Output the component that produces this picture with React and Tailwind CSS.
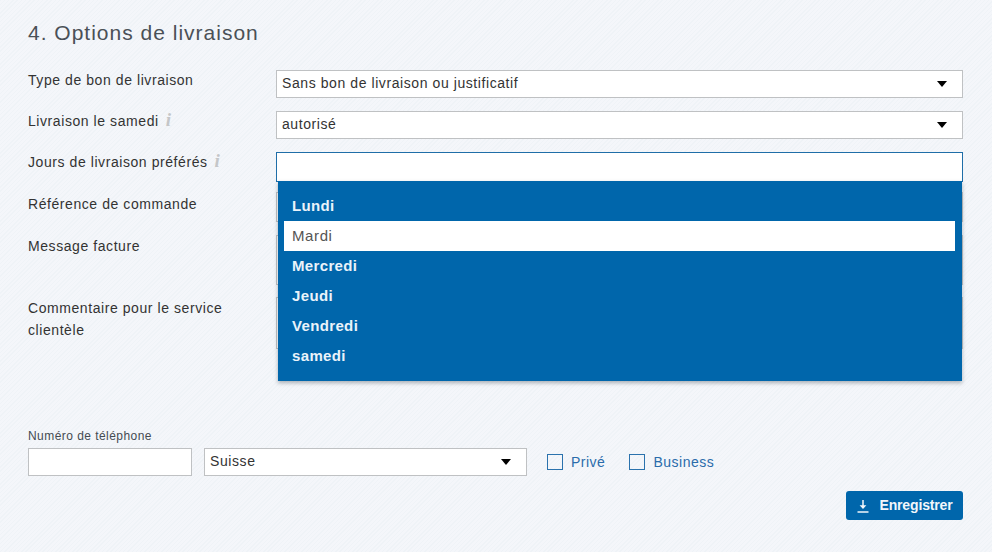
import React from 'react';

const days = ['Lundi', 'Mardi', 'Mercredi', 'Jeudi', 'Vendredi', 'samedi'];

const Caret = () => (
  <span className="w-0 h-0 border-x-[5px] border-x-transparent border-t-[6px] border-t-black" />
);

const InfoMark = () => (
  <span className="ml-[7px] font-['Liberation_Serif',serif] italic font-bold text-[19px] leading-none text-[#c4c6c8]">i</span>
);

const Select = ({ value, className = '' }) => (
  <div className={`h-[28px] bg-white border border-[#bfc1c3] flex items-center justify-between pl-[5px] pr-[15px] text-[14px] tracking-[0.58px] text-[#333] ${className}`}>
    <span className="-mt-[2px]">{value}</span>
    <Caret />
  </div>
);

const Row = ({ label, className = '', labelClass = '', children }) => (
  <div className={`flex ${className}`}>
    <div className={`w-[248px] shrink-0 tracking-[0.57px] leading-[22px] text-[14px] text-[#333] ${labelClass}`}>{label}</div>
    <div className="flex-1">{children}</div>
  </div>
);

const Checkbox = ({ label }) => (
  <label className="flex items-center gap-[8px] text-[14px] text-[#2a6cab] tracking-[0.5px]">
    <span className="w-[16px] h-[16px] border border-[#2a72ad] bg-transparent" />
    {label}
  </label>
);

const App = () => {
  return (
    <div className="relative w-[992px] h-[552px] overflow-hidden font-['Liberation_Sans',sans-serif] bg-[#f1f4f8] bg-[repeating-linear-gradient(135deg,#eff3f7_0px,#eff3f7_1px,#f4f6fa_1px,#f4f6fa_3px)] pl-[28px] pr-[29px] pt-[21px]">
      <h2 className="text-[21px] leading-[24px] tracking-[1px] text-[#4a5056] font-normal">4. Options de livraison</h2>

      <div className="mt-[25px]">
        <Row label="Type de bon de livraison" labelClass="-mt-[1px]">
          <Select value="Sans bon de livraison ou justificatif" />
        </Row>
        <Row label={<>Livraison le samedi<InfoMark /></>} className="mt-[13px]" labelClass="-mt-[1px]">
          <Select value="autorisé" />
        </Row>
        <div className="relative mt-[13px]">
          <Row label={<>Jours de livraison préférés<InfoMark /></>} labelClass="-mt-[1px]">
            <div className="h-[30px] bg-white border border-[#1f6ea8]" />
          </Row>

          {/* open day list */}
          <ul className="absolute z-10 left-[250px] top-[29px] w-[684px] h-[200px] bg-[#0066ab] pt-[10px] pl-[6px] pr-[7px] shadow-[0_2px_4px_rgba(60,70,80,0.4)] text-[15px]">
            {days.map((day) => (
              <li
                key={day}
                className={`h-[30px] leading-[30px] pl-[8px] ${day === 'Mardi' ? 'bg-white text-[#555] tracking-[0.6px]' : 'text-[#eaf3fa] font-bold tracking-[0.35px]'}`}
              >
                {day}
              </li>
            ))}
          </ul>
        </div>
        <Row label="Référence de commande" className="mt-[10px]" labelClass="pt-[1px]">
          <div className="h-[30px] bg-white border border-[#bfc1c3]" />
        </Row>
        <Row label="Message facture" className="mt-[13px]">
          <div className="h-[50px] bg-white border border-[#bfc1c3]" />
        </Row>
        <Row label={<>Commentaire pour le service<br />clientèle</>} className="mt-[12px]" labelClass="pr-[20px]">
          <div className="h-[52px] bg-white border border-[#bfc1c3]" />
        </Row>
      </div>

      <div className="mt-[80px] text-[12px] leading-[14px] tracking-[0.45px] text-[#444b52]">Numéro de téléphone</div>
      <div className="mt-[5px] flex items-center">
        <div className="w-[164px] h-[28px] bg-white border border-[#bfc1c3]" />
        <Select value="Suisse" className="w-[323px] ml-[12px]" />
        <div className="ml-[20px] flex items-center gap-[24px]">
          <Checkbox label="Privé" />
          <Checkbox label="Business" />
        </div>
      </div>

      <div className="mt-[15px] flex justify-end">
        <button className="w-[117px] h-[29px] rounded-[3px] bg-[#0066ab] text-[#f2f7fb] text-[14px] font-bold tracking-[-0.15px] flex items-center justify-center gap-[9px]">
          <svg width="14" height="14" viewBox="0 0 14 14" fill="none" stroke="currentColor" strokeWidth="1.5">
            <path d="M7 1v7.5" />
            <path d="M7 10L3.6 6.2h6.8z" fill="currentColor" stroke="none" />
            <path d="M1.5 13h11" />
          </svg>
          Enregistrer
        </button>
      </div>
    </div>
  );
};

export default App;
